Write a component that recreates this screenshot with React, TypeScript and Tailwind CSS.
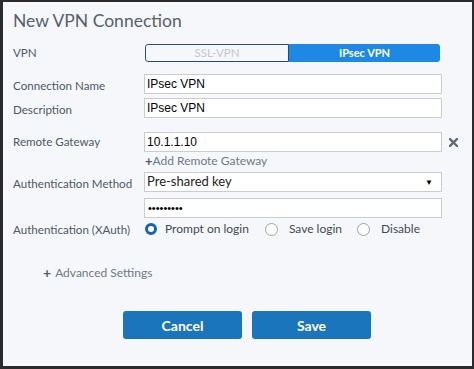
import React from "react";

type RadioProps = {
  label: string;
  checked?: boolean;
};

function Radio({ label, checked }: RadioProps) {
  return (
    <div className="flex items-center">
      {checked ? (
        <span className="w-[12px] h-[12px] rounded-full border-[3px] border-[#1565a8] bg-white" />
      ) : (
        <span className="w-[13px] h-[13px] rounded-full border border-[#9aa3ab] bg-white" />
      )}
      <span className={`${checked ? "ml-[8px]" : "ml-[11px]"} text-[12px] text-[#3f4a54]`}>{label}</span>
    </div>
  );
}

function Field({ children }: { children: React.ReactNode }) {
  return (
    <div className="w-[298px] h-[20px] border border-[#c9cdd1] bg-white flex items-center px-[2px]">
      {children}
    </div>
  );
}

const arial = { fontFamily: "'Liberation Sans', Arial, sans-serif" };

export default function App() {
  return (
    <div
      className="w-[474px] h-[369px] bg-[#f6f7fb] border-[#2b2b2d] border-t-2 border-l-[3px] border-r-2 border-b-[3px] text-[#4d5964]"
      style={{ fontFamily: "Lato, 'Open Sans', sans-serif" }}
    >
      <div className="pl-[10px] pt-[7px]">
        <h1 className="text-[17.5px] leading-[24px] text-[#56616b]">New VPN Connection</h1>

        <div className="flex items-center mt-[11px] h-[18px]">
          <div className="w-[132px] text-[11.6px]">VPN</div>
          <div className="flex w-[295px] h-[18px] rounded-[3px] overflow-hidden">
            <div className="w-[144px] h-full border border-[#1d4e7c] rounded-l-[3px] bg-[#f6f7fb] flex items-center justify-center text-[11.5px] text-[#c3c8cd]">
              SSL-VPN
            </div>
            <div className="flex-1 h-full bg-[#1e88e5] flex items-center justify-center text-[11px] font-bold text-white">
              IPsec VPN
            </div>
          </div>
        </div>

        <div className="flex items-center h-[20px] mt-[12px]">
          <div className="w-[131px] text-[11.6px] pt-[3px]">Connection Name</div>
          <Field>
            <span className="text-[12px] text-black" style={arial}>IPsec VPN</span>
          </Field>
        </div>

        <div className="flex items-center h-[20px] mt-[4px]">
          <div className="w-[131px] text-[11.6px] pt-[3px]">Description</div>
          <Field>
            <span className="text-[12px] text-black" style={arial}>IPsec VPN</span>
          </Field>
        </div>

        <div className="flex items-center h-[20px] mt-[14px]">
          <div className="w-[131px] text-[11.6px]">Remote Gateway</div>
          <Field>
            <span className="text-[12px] text-black" style={arial}>10.1.1.10</span>
          </Field>
          <svg className="ml-[7px]" width="9" height="9" viewBox="0 0 9 9">
            <path d="M1 1 L8 8 M8 1 L1 8" stroke="#5f6b75" strokeWidth="2.4" strokeLinecap="square" />
          </svg>
        </div>

        <div className="flex items-center h-[16px] mt-[1px] pl-[132px] text-[12px] text-[#6f7a85]">
          <span className="font-bold text-[#56616b] text-[13px] leading-none">+</span>
          <span>Add Remote Gateway</span>
        </div>

        <div className="flex items-center h-[20px] mt-[3px]">
          <div className="w-[131px] text-[11.6px] pt-[3px]">Authentication Method</div>
          <Field>
            <span className="text-[13px] text-[#222] flex-1">Pre-shared key</span>
            <span className="text-[8px] text-black mr-[6px]">▼</span>
          </Field>
        </div>

        <div className="flex items-center h-[20px] mt-[6px] pl-[131px]">
          <Field>
            <span className="text-[11px] text-black pl-[1px]" style={arial}>•••••••••</span>
          </Field>
        </div>

        <div className="flex items-center mt-[3px] h-[16px]">
          <div className="w-[132px] text-[11.6px] pt-[2px]">Authentication (XAuth)</div>
          <Radio label="Prompt on login" checked />
          <div className="ml-[16px]">
            <Radio label="Save login" />
          </div>
          <div className="ml-[15px]">
            <Radio label="Disable" />
          </div>
        </div>

        <div className="flex items-center h-[16px] mt-[28px] pl-[30px] text-[12px] text-[#6f7a85]">
          <span className="font-bold text-[#56616b] text-[14px] leading-none mr-[4px]">+</span>
          <span>Advanced Settings</span>
        </div>

        <div className="flex mt-[30px] pl-[110px] gap-[10px]">
          <button className="w-[119px] h-[28px] rounded-[3px] bg-[#1b75bc] text-white font-bold text-[14px]">
            Cancel
          </button>
          <button className="w-[119px] h-[28px] rounded-[3px] bg-[#1b75bc] text-white font-bold text-[14px]">
            Save
          </button>
        </div>
      </div>
    </div>
  );
}
